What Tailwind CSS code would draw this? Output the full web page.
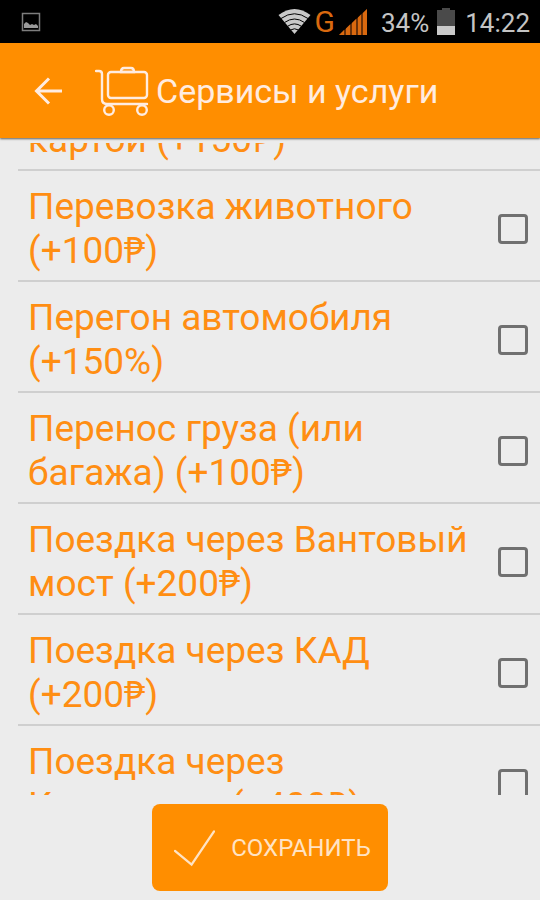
<!DOCTYPE html>
<html lang="ru">
<head>
  <meta charset="UTF-8" />
  <meta name="viewport" content="width=device-width, initial-scale=1.0" />
  <title>Сервисы и услуги</title>
  <script src="https://cdn.jsdelivr.net/npm/@tailwindcss/browser@4"></script>
</head>
<body class="h-screen flex flex-col overflow-hidden bg-[#ececec] font-['Roboto','Noto_Sans',sans-serif]">
  <!-- Status bar -->
  <div class="h-[43px] shrink-0 flex items-center justify-between bg-black pl-[21px] pr-[10px] text-[#c4c4c4]">
    <svg class="w-5 h-5" viewBox="0 0 20 20" fill="none" aria-hidden="true">
      <rect x="1.5" y="1.5" width="17" height="17" stroke="#7d7d7d" stroke-width="1.5" />
      <path d="M3 16v-4l2-2 2 1 2 2 2-1 2 1 2-1 2 2v2z" fill="#9a9a9a" />
    </svg>
    <div class="flex items-center">
      <svg class="w-[33px] h-[25px]" viewBox="0 0 32 25" aria-hidden="true">
        <path d="M0 6Q16-6 32 6L16 25z" fill="#c9c9c9" />
        <path d="M2.5 9.5Q16 0 29.5 9.5M6 13.5Q16 6.5 26 13.5M9 17.3Q16 12.5 23 17.3M12 21Q16 18.5 20 21" fill="none" stroke="#000" stroke-width="1" />
      </svg>
      <span class="ml-1 text-[30px] leading-8 text-[#d9690f]">G</span>
      <svg class="ml-1 w-7 h-[26px]" viewBox="0 0 28 26" fill="#d9690f" aria-hidden="true">
        <path d="M0 26L28 0v26z" fill="#6b3208" />
        <path d="M0 26l5-5v5zM7 26v-6.500l4-4V26zM13 26V14l4-4v16zM19 26V8.500l3-3V26zM24 26V4l4-4v26z" />
      </svg>
      <span class="ml-[14px] pt-[3px] text-[26px] leading-8">34%</span>
      <svg class="ml-2 w-[18px] h-[27px]" viewBox="0 0 18 27" aria-hidden="true">
        <path d="M5 0h8v2h5v25H0V2h5z" fill="#4a4a4a" />
        <path d="M0 18h18v9H0z" fill="#c9c9c9" />
      </svg>
      <span class="ml-[10px] pt-[3px] text-[26px] leading-8">14:22</span>
    </div>
  </div>

  <!-- App bar -->
  <header class="relative h-[95px] shrink-0 flex items-center bg-[#ff8e00] pl-[34px] text-[#ffece0] shadow-[0_1px_2px_rgba(0,0,0,0.6)]">
    <button type="button" aria-label="Назад" class="w-7 h-7">
      <svg class="w-7 h-7" viewBox="0 0 28 28" fill="none" stroke="currentColor" stroke-width="3" aria-hidden="true">
        <path d="M28 14H2M15 1.5L2.5 14 15 26.5" />
      </svg>
    </button>
    <svg class="ml-[33px] w-[54px] h-[50px]" viewBox="0 0 54 50" fill="none" stroke="currentColor" stroke-width="2.4" stroke-linecap="round" aria-hidden="true">
      <path d="M1 5h3q3 0 3 3v25q0 5 5 5h40" />
      <rect x="13" y="6" width="39" height="26" rx="3" />
      <path d="M26 6q0-4 3-4h7q3 0 3 4z" />
      <circle cx="14" cy="44" r="4.8" />
      <circle cx="47" cy="44" r="4.8" />
    </svg>
    <h1 class="ml-[7px] text-[34px] leading-10 whitespace-nowrap">Сервисы и услуги</h1>
  </header>

  <!-- Services, scrolled part of the way down -->
  <main class="mt-[5px] flex-1 min-h-0 overflow-hidden">
    <ul class="-mt-[83px] pl-[18px] text-[37px] leading-[44px] text-[#ff8e13]">
      <li class="border-b-2 border-[#cfcfcf]">
        <label class="flex items-center justify-between pt-[14px] pb-[7px] pl-[10px] pr-3">
          <span>Оплата банковской<br />картой (+150<span class="font-['Noto_Sans'] leading-8">₱</span>)</span>
          <input type="checkbox" class="appearance-none w-[30px] h-[30px] shrink-0 border-3 border-[#707070] rounded-sm checked:bg-[#ff8e00]" />
        </label>
      </li>
      <li class="border-b-2 border-[#cfcfcf]">
        <label class="flex items-center justify-between pt-[14px] pb-[7px] pl-[10px] pr-3">
          <span>Перевозка животного<br />(+100<span class="font-['Noto_Sans'] leading-8">₱</span>)</span>
          <input type="checkbox" class="appearance-none w-[30px] h-[30px] shrink-0 border-3 border-[#707070] rounded-sm checked:bg-[#ff8e00]" />
        </label>
      </li>
      <li class="border-b-2 border-[#cfcfcf]">
        <label class="flex items-center justify-between pt-[14px] pb-[7px] pl-[10px] pr-3">
          <span>Перегон автомобиля<br />(+150%)</span>
          <input type="checkbox" class="appearance-none w-[30px] h-[30px] shrink-0 border-3 border-[#707070] rounded-sm checked:bg-[#ff8e00]" />
        </label>
      </li>
      <li class="border-b-2 border-[#cfcfcf]">
        <label class="flex items-center justify-between pt-[14px] pb-[7px] pl-[10px] pr-3">
          <span>Перенос груза (или<br />багажа) (+100<span class="font-['Noto_Sans'] leading-8">₱</span>)</span>
          <input type="checkbox" class="appearance-none w-[30px] h-[30px] shrink-0 border-3 border-[#707070] rounded-sm checked:bg-[#ff8e00]" />
        </label>
      </li>
      <li class="border-b-2 border-[#cfcfcf]">
        <label class="flex items-center justify-between pt-[14px] pb-[7px] pl-[10px] pr-3">
          <span>Поездка через Вантовый<br />мост (+200<span class="font-['Noto_Sans'] leading-8">₱</span>)</span>
          <input type="checkbox" class="appearance-none w-[30px] h-[30px] shrink-0 border-3 border-[#707070] rounded-sm checked:bg-[#ff8e00]" />
        </label>
      </li>
      <li class="border-b-2 border-[#cfcfcf]">
        <label class="flex items-center justify-between pt-[14px] pb-[7px] pl-[10px] pr-3">
          <span>Поездка через КАД<br />(+200<span class="font-['Noto_Sans'] leading-8">₱</span>)</span>
          <input type="checkbox" class="appearance-none w-[30px] h-[30px] shrink-0 border-3 border-[#707070] rounded-sm checked:bg-[#ff8e00]" />
        </label>
      </li>
      <li class="border-b-2 border-[#cfcfcf]">
        <label class="flex items-center justify-between pt-[14px] pb-[7px] pl-[10px] pr-3">
          <span>Поездка через<br />Кронштадт (+400<span class="font-['Noto_Sans'] leading-8">₱</span>)</span>
          <input type="checkbox" class="appearance-none w-[30px] h-[30px] shrink-0 border-3 border-[#707070] rounded-sm checked:bg-[#ff8e00]" />
        </label>
      </li>
    </ul>
  </main>

  <footer class="shrink-0 flex justify-center pt-[9px] pb-[9px]">
    <button type="button" class="h-[87px] flex items-center gap-4 rounded-lg bg-[#ff8e00] pl-[22px] pr-[17px] text-2xl text-[#ffe3c4]">
      <svg class="w-[41px] h-[38px]" viewBox="0 0 42 38" fill="none" stroke="currentColor" stroke-width="2.4" stroke-linecap="round" aria-hidden="true">
        <path d="M1 22l17 14L41 2" />
      </svg>
      СОХРАНИТЬ
    </button>
  </footer>
</body>
</html>
